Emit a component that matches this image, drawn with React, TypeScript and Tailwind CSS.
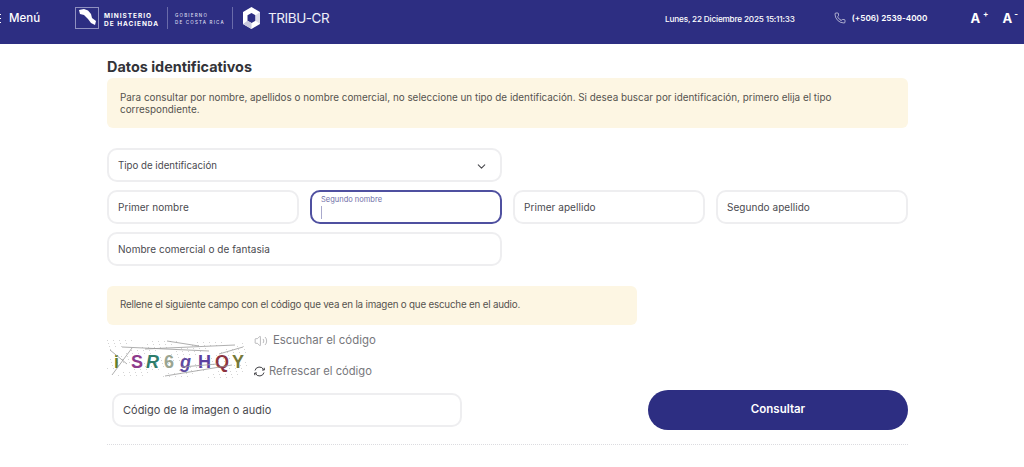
import React from 'react';
import { ChevronDown, Phone, Volume2 } from 'lucide-react';

const font = "font-['Inter','Noto_Sans',sans-serif]";

const Field = ({ label, className = '' }: { label: string; className?: string }) => (
  <div className={`flex h-[34px] items-center rounded-[10px] border-2 border-[#eeeef0] bg-white pl-[9px] pt-[1px] text-[10px] tracking-[0.05px] text-[#4a4a4f] ${className}`}>
    {label}
  </div>
);

const Captcha = () => {
  const letters = [
    { c: 'i', x: 7, color: '#5f7f2e', italic: false },
    { c: 'S', x: 24, color: '#8e3b8c', italic: false },
    { c: 'R', x: 39, color: '#2f7d6b', italic: true },
    { c: '6', x: 57, color: '#9aa592', italic: false },
    { c: 'g', x: 73, color: '#5f4aa0', italic: true },
    { c: 'H', x: 91, color: '#5b3f9e', italic: false },
    { c: 'Q', x: 108, color: '#8c3340', italic: false },
    { c: 'Y', x: 125, color: '#77793a', italic: false },
  ];
  const dots = Array.from({ length: 190 }, (_, i) => ({
    x: (i * 37) % 140,
    y: (i * 23) % 38,
  }));
  return (
    <svg width="140" height="38" viewBox="0 0 140 38" className="shrink-0">
      {dots.map((d, i) => (
        <rect key={i} x={d.x} y={d.y} width="1" height="1" fill="#d4d4d4" />
      ))}
      {letters.map((l) => (
        <text
          key={l.c}
          x={l.x}
          y="28"
          fontSize="18"
          fontWeight="700"
          fontStyle={l.italic ? 'italic' : 'normal'}
          fill={l.color}
          fontFamily="Liberation Sans, sans-serif"
        >
          {l.c}
        </text>
      ))}
      <g stroke="#9a9a9a" strokeWidth="0.8" fill="none">
        <path d="M5 35 L25 8" />
        <path d="M3 10 L20 24" />
        <path d="M15 7 L102 11" />
        <path d="M38 9 L128 5" />
        <path d="M60 1 L92 6" />
        <path d="M58 36 L125 25" />
        <path d="M75 27 L110 24" />
        <path d="M112 14 L136 7" />
      </g>
    </svg>
  );
};

export default function App() {
  return (
    <div className={`${font} h-[467px] w-[1024px] overflow-hidden bg-white`}>
      <header className="flex h-[44px] items-start bg-[#2d2e82] text-white">
        <div className="flex h-[37px] items-center">
          <div className="mr-[8px] flex h-[9px] w-[1px] flex-col justify-between">
            <span className="h-[1px] bg-white" />
            <span className="h-[1px] bg-white" />
            <span className="h-[1px] bg-white" />
          </div>
          <span className="text-[11.5px] font-medium">Menú</span>
        </div>

        <div className="ml-[35px] mt-[7px] flex h-[22px] w-[24px] items-center justify-center border border-[#8f90c0]">
          <svg width="22" height="20" viewBox="0 0 22 20">
            <path d="M3 2 L8 1 L12 2.5 L15 6 L16 10 L20 13 L19 17 L15 15 L12 11 L8 7 L4 6 Z" fill="#fff" />
          </svg>
        </div>
        <div className="ml-[5px] mt-[12px] text-[6.5px] font-bold leading-[8px] tracking-[0.95px]">
          <div>MINISTERIO</div>
          <div>DE HACIENDA</div>
        </div>
        <div className="ml-[8px] mt-[7px] h-[22px] w-[1px] bg-[#6a6baa]" />
        <div className="ml-[7px] mt-[12px] text-[4.5px] font-medium leading-[7px] tracking-[1.2px] text-[#dcdcee]">
          <div>GOBIERNO</div>
          <div>DE COSTA RICA</div>
        </div>
        <div className="ml-[7px] mt-[7px] h-[22px] w-[1px] bg-[#6a6baa]" />
        <svg width="17" height="22" viewBox="0 0 17 22" className="ml-[10px] mt-[7px]">
          <path d="M8.5 0 L17 5 L17 17 L8.5 22 L0 17 L0 5 Z M8.5 6 L4.5 8.3 L4.5 13.7 L8.5 16 L12.5 13.7 L12.5 8.3 Z" fill="#fff" fillRule="evenodd" />
          <path d="M0 17 L4.5 13.7 L8.5 16 L8.5 22 Z" fill="#c9c9dd" />
          <path d="M17 5 L12.5 8.3 L12.5 13.7 L17 17 Z" fill="#dcdcea" />
        </svg>
        <span className="ml-[8px] mt-[9px] text-[13.5px] leading-[18px] tracking-[-0.4px] text-[#eeeef8]">TRIBU-CR</span>

        <span className="ml-auto mt-[12px] text-[8.2px] font-medium leading-[14px] tracking-[-0.18px]">Lunes, 22 Diciembre 2025 15:11:33</span>
        <Phone className="ml-[39px] mt-[12px] h-[12px] w-[12px]" strokeWidth={1.2} />
        <span className="ml-[6px] mt-[11px] text-[8.2px] font-semibold leading-[14px]">(+506) 2539-4000</span>
        <div className="ml-[43px] mt-[10px] flex items-start text-[13px] font-bold leading-[16px]">
          A<span className="ml-[3px] text-[8px] leading-[8px]">+</span>
        </div>
        <div className="ml-[14px] mr-[6px] mt-[10px] flex items-start text-[13px] font-bold leading-[16px]">
          A<span className="ml-[2px] text-[8px] leading-[8px]">-</span>
        </div>
      </header>

      <main className="mx-[107px] w-[801px]">
        <h1 className="mt-[14px] text-[14.4px] font-bold leading-[18px] text-[#333338]">Datos identificativos</h1>
        <div className="mt-[2px] h-[50px] rounded-[6px] bg-[#fdf6e3] px-[13px] pt-[13px] text-[9.9px] leading-[12px] text-[#55534f]">
          Para consultar por nombre, apellidos o nombre comercial, no seleccione un tipo de identificación. Si desea buscar por identificación, primero elija el tipo correspondiente.
        </div>

        <div className="mt-[20px] flex h-[34px] w-[395px] items-center justify-between rounded-[10px] border-2 border-[#eeeef0] pl-[9px] pr-[12px] pt-[2px] text-[9.7px] text-[#4a4a4f]">
          Tipo de identificación
          <ChevronDown className="h-[13px] w-[13px]" strokeWidth={2} />
        </div>

        <div className="mt-[8px] grid grid-cols-4 gap-x-[11px] gap-y-[8px]">
          <Field label="Primer nombre" />
          <div className="flex h-[34px] flex-col rounded-[10px] border-2 border-[#4f50a0] pl-[9px] pt-[3px]">
            <span className="text-[7.5px] leading-[10px] text-[#6f70a8]">Segundo nombre</span>
            <span className="mt-[1px] h-[13px] w-[1px] bg-[#a9a9cc]" />
          </div>
          <Field label="Primer apellido" />
          <Field label="Segundo apellido" />
          <Field label="Nombre comercial o de fantasia" className="col-span-2" />
        </div>

        <div className="mt-[20px] flex h-[39px] w-[530px] items-center rounded-[6px] bg-[#fdf6e3] pl-[13px] text-[9.8px] tracking-[-0.2px] text-[#55534f]">
          Rellene el siguiente campo con el código que vea en la imagen o que escuche en el audio.
        </div>

        <div className="mt-[8px] flex h-[50px] items-start">
          <div className="mt-[7px]">
            <Captcha />
          </div>
          <div className="ml-[7px] flex flex-col text-[#77777c]">
            <div className="flex h-[16px] items-center gap-[5px] text-[11.4px]">
              <Volume2 className="h-[14px] w-[14px] text-[#8a8a8e]" strokeWidth={1} />
              Escuchar el código
            </div>
            <div className="mt-[14px] flex h-[16px] items-center gap-[4px] text-[11.2px]">
              <svg width="11" height="11" viewBox="0 0 11 11" fill="none" stroke="#3f3f44" strokeWidth="1">
                <path d="M1 4.5 A4.6 4.6 0 0 1 9.6 3.6" />
                <path d="M10 6.5 A4.6 4.6 0 0 1 1.4 7.4" />
                <path d="M8 4 L10.4 4 L10.2 1.8" />
                <path d="M3 7 L0.6 7 L0.8 9.2" />
              </svg>
              Refrescar el código
            </div>
          </div>
        </div>

        <div className="flex items-start justify-between">
          <div className="ml-[5px] mt-[10px] flex h-[34px] w-[350px] items-center rounded-[10px] border-2 border-[#eeeef0] pl-[9px] pt-[1px] text-[11px] text-[#4a4a4f]">
            Código de la imagen o audio
          </div>
          <button type="button" className="mt-[7px] h-[40px] w-[260px] rounded-full bg-[#2d2e82] text-[11.5px] font-semibold text-white">
            Consultar
          </button>
        </div>

        <div className="mt-[14px] border-t border-dotted border-[#dcdce0]" />
      </main>
    </div>
  );
}
